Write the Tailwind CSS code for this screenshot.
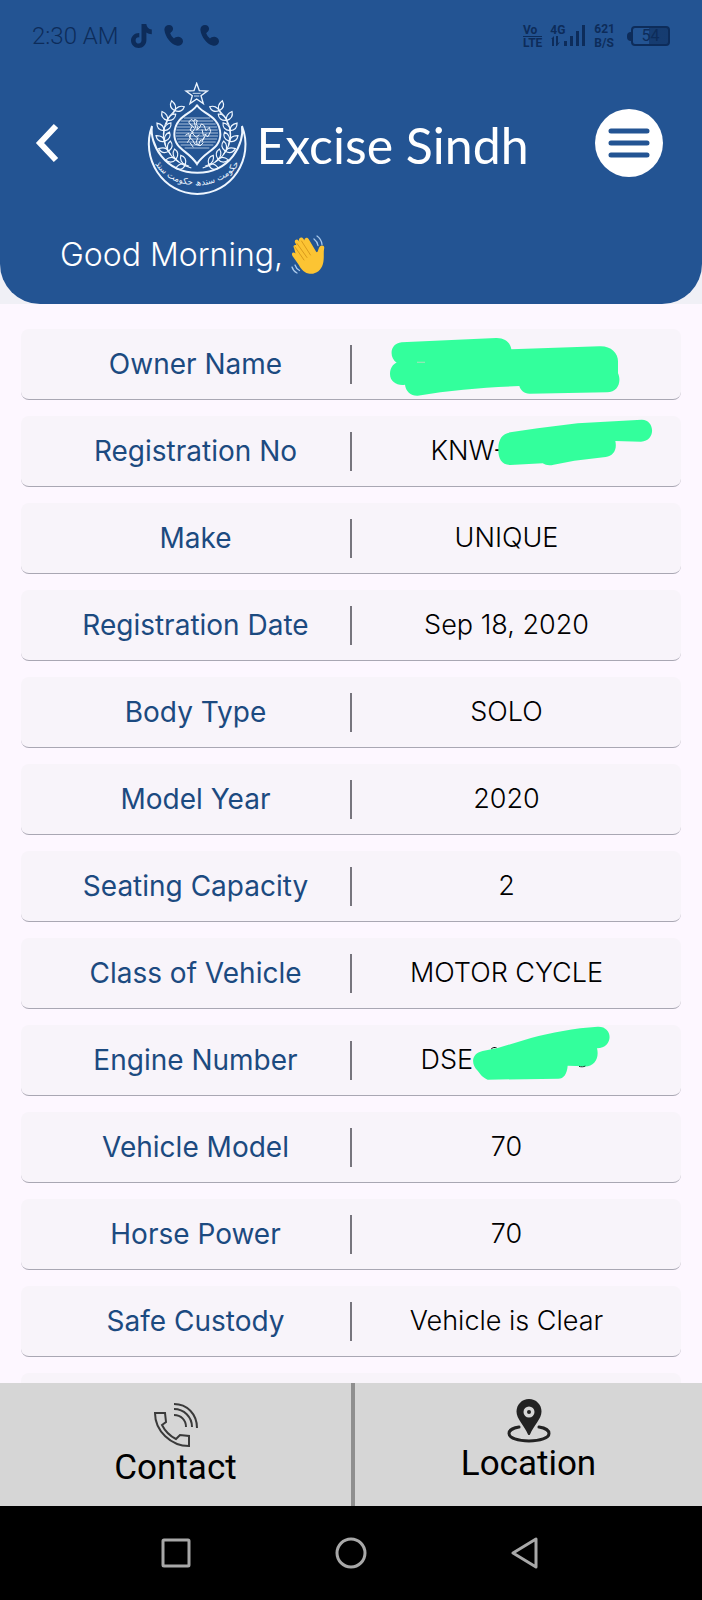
<!DOCTYPE html>
<html lang="en">
<head>
  <meta charset="UTF-8" />
  <meta name="viewport" content="width=device-width, initial-scale=1.0" />
  <title>Excise Sindh</title>
  <script src="https://cdn.jsdelivr.net/npm/@tailwindcss/browser@4"></script>
</head>
<body class="h-screen flex flex-col bg-[#fdf7ff] font-['Inter','Noto_Sans',sans-serif] text-black">

  <!-- header -->
  <div class="flex-none bg-[#f0f0f6]">
    <header class="bg-[#235493] rounded-b-[40px] pb-6">

      <!-- status bar -->
      <div class="flex items-center justify-between h-[72px] px-8 text-[#0d2c5a] font-['Roboto',sans-serif]">
        <div class="flex items-center gap-3">
          <span class="text-2xl font-light">2:30 AM</span>
          <svg class="w-[21px] h-6" viewBox="0 0 21 24" fill="currentColor">
            <path d="M10.5 0h4.800c.3 3 2.200 5.200 5.500 5.500v4.700c-2.100 0-3.900-.6-5.400-1.600v7.400c0 4.600-3.400 8-7.700 8S0 20.700 0 16.500s3.500-7.700 8.300-7.600v4.500c-2.200-.3-3.700 1.100-3.700 3s1.300 3.100 3 3.100c1.800 0 2.900-1.300 2.900-3.200z"/>
          </svg>
          <div class="flex gap-4">
            <svg class="w-5 h-[22px]" viewBox="0 0 20 22" fill="currentColor">
              <path d="M5 0c2.600 0 4.300 2 4 4.300C8.800 6 7.300 7 6.200 8.300c.9 2.200 2 3.800 3.800 5.200 1-.9 2.400-1.800 4.400-1.700 3 .2 5 2.600 4.500 5.200-.5 2.800-3.400 4.400-6.300 3.600C6.500 18.800 1.500 12 .5 5.500-.1 2.300 2 0 5 0z"/>
            </svg>
            <svg class="w-5 h-[22px]" viewBox="0 0 20 22" fill="currentColor">
              <path d="M5 0c2.600 0 4.300 2 4 4.300C8.800 6 7.300 7 6.200 8.300c.9 2.200 2 3.800 3.800 5.200 1-.9 2.400-1.800 4.400-1.700 3 .2 5 2.600 4.500 5.200-.5 2.800-3.400 4.400-6.300 3.600C6.500 18.800 1.500 12 .5 5.500-.1 2.300 2 0 5 0z"/>
            </svg>
          </div>
        </div>
        <div class="flex items-center gap-2 text-xs leading-3 font-bold">
          <div>
            <p>Vo</p>
            <p class="border-t border-[#0d2c5a]">LTE</p>
          </div>
          <div class="relative w-9 h-6">
            <p>4G</p>
            <svg class="absolute inset-0 w-9 h-6" viewBox="0 0 36 24" fill="currentColor">
              <path d="M1 15l3-3v10H2v-7zM6 12h2v7l2-1-3 4H6zM14 17h3v5h-3zM20 12h3v10h-3zM26 7h3v15h-3zM32 1h3v21h-3z"/>
            </svg>
          </div>
          <div class="leading-[14px]">
            <p>621</p>
            <p>B/S</p>
          </div>
          <div class="flex items-center pl-1">
            <span class="w-1 h-[9px] bg-[#0d2c5a] rounded-l"></span>
            <span class="flex items-center justify-center w-[39px] h-5 rounded border-2 border-[#0d2c5a] bg-linear-to-r from-transparent from-45% to-[#0d2c5a]/60 to-45% text-base font-normal">54</span>
          </div>
        </div>
      </div>

      <!-- title row -->
      <div class="flex items-center justify-between pt-[10px] pl-8 pr-[39px]">
        <button type="button" aria-label="Back" class="w-7 h-[42px] mt-2">
          <svg class="w-full h-full" viewBox="0 0 28 42" fill="none" stroke="#fff" stroke-width="6">
            <path d="M24 4L8 21l16 17"/>
          </svg>
        </button>

        <div class="flex items-center gap-2 pl-5">
          <svg class="w-[102px] h-[114px] flex-none" viewBox="48 30 306 342" fill="none" stroke="#eef6ff">
            <defs>
              <g id="pair">
                <path d="M0 0C-16 0-22-10-22-22C-10-20 0-12 0 0z"/>
                <path d="M0 0C16-2 22-12 20-24C8-22-1-12 0 0z"/>
                <path d="M0 0v12"/>
              </g>
              <g id="branch" stroke-width="3.500">
                <use href="#pair" transform="translate(134 116) rotate(28)"/>
                <use href="#pair" transform="translate(112 145) rotate(14)"/>
                <use href="#pair" transform="translate(102 176) rotate(2)"/>
                <use href="#pair" transform="translate(104 208) rotate(-12)"/>
                <use href="#pair" transform="translate(116 238) rotate(-30)"/>
                <use href="#pair" transform="translate(138 262) rotate(-48)"/>
                <use href="#pair" transform="translate(166 278) rotate(-66)"/>
                <path d="M134 116C100 150 90 190 112 234C128 262 150 278 184 288"/>
              </g>
            </defs>
            <path stroke-width="4" d="M200 34l8 22 24 1-19 14 7 24-20-14-20 14 7-24-19-14 24-1z"/>
            <path stroke-width="2.500" d="M188 64h24M192 72h16"/>
            <use href="#branch"/>
            <use href="#branch" transform="matrix(-1 0 0 1 402 0)"/>
            <path stroke-width="6" d="M201 98C196 122 133 128 133 187C133 232 176 236 201 276C226 236 271 232 271 187C271 128 206 122 201 98z"/>
            <path stroke-width="2" d="M162 138h78M152 147h98M145 156h112M141 165h120M139 174h124M138 183h126M138 192h126M141 201h120M145 210h112M152 219h98M164 228h74"/>
            <path stroke-width="3" d="M176 150l8-8 8 6 2-6 8 4-4 10 6 8-4 10 8-6 6-12 8 4 6 16 10-10 4 12-8 16-8-4-6 12-10 4-4 14-12-4-6-12-8-6 2-12 8-4-10-8 6-10zM184 158l10 12-8 12 12 14 10-8M204 196l-6 16 12 10 10-10M216 172l4 18 10-4M166 190l10-6 4 16-8 12M180 212l10 14M192 148l6 22M222 196l-6 14"/>
            <path stroke-width="6" d="M66 162C30 260 100 366 202 366C304 366 374 260 336 162C344 214 302 302 202 302C102 302 58 214 66 162z"/>
            <path id="motto" stroke="none" d="M68 262C116 366 286 366 334 262"/>
            <text fill="#eef6ff" stroke="none" font-family="'DejaVu Sans', sans-serif" font-size="26" text-anchor="middle">
              <textPath href="#motto" startOffset="50%">حکومت سندھ حکومت سنڌ</textPath>
            </text>
          </svg>
          <h1 class="mt-3 text-white text-[50px] leading-[56px] font-['Lato',sans-serif] whitespace-nowrap">Excise Sindh</h1>
        </div>

        <button type="button" aria-label="Menu" class="flex items-center justify-center w-[68px] h-[68px] mt-2 rounded-full bg-white">
          <svg class="w-[42px] h-[30px]" viewBox="0 0 42 30" stroke="#235493" stroke-width="5" stroke-linecap="round">
            <path d="M3 3h36M3 15h36M3 27h36"/>
          </svg>
        </button>
      </div>

      <!-- greeting -->
      <div class="flex items-center gap-2 pt-9 pb-[2px] pl-[60px]">
        <p class="text-white text-[32px] leading-[46px] font-light">Good Morning,</p>
        <svg class="w-9 h-10" viewBox="0 0 36 40" fill="none" stroke-linecap="round">
          <path fill="#fcc433" d="M3 13c-1.500-2 .5-4 2.500-2.700L4 7.500C3 5 6 3.500 7.500 5.500L8.500 7C6.500 3 10.500 1 12.500 4l1 1.500C13 3 16 1.500 17.600 4l7.400 12.500c.8 1.200 1.600.5 1.900-.5.800-2.500 1.200-4.800 3.700-5.500 1.600-.4 2.900.8 2.600 2.500-1 5 .3 10-1.300 16-1.900 7-8 11-14.500 9.500C12 37.300 9.500 33 7.500 29.500L1.500 21c-1.800-3 1-4.500 3-2.500z"/>
          <path stroke="#d99a1c" stroke-width="1" d="M4 12l9 13M6 8.500l10 14M10.500 6l9 14"/>
          <path stroke="#a9c8ea" stroke-width="1.300" d="M23 4c2 1.500 3.500 3.500 4 6.500M26 1c3 2 4.600 5 5 8.500M4 30c.8 2.500 2.300 4.300 4.500 5.500M1 32c.8 2.800 2.500 4.800 5 6"/>
        </svg>
      </div>
    </header>
  </div>
  <!-- end header -->

  <!-- vehicle details -->
  <main class="flex-1 min-h-0 overflow-hidden px-[21px] pt-[25px]">
    <dl class="flex flex-col gap-4 text-center text-[27px]">
      <div class="flex flex-none items-center h-[71px] px-5 bg-[#f8f4fa] rounded-lg border-b border-[#a9a7b3]">
        <dt class="flex-1 text-[28px] text-[#1c4a80]">Owner Name</dt>
        <dd class="h-[39px] border-l-2 border-[#77757d]"></dd>
        <dd class="relative flex-1 h-full">
          <svg class="absolute top-0 left-1/2 -translate-x-1/2 w-[310px] h-[71px]" viewBox="3 57 930 213" fill="#33ff9c">
            <path d="M152 97L435 84C462 83 478 98 481 118L745 109C780 107 803 130 801 158L801 190C812 214 802 247 768 247L536 251C518 250 508 240 505 228C400 232 300 240 200 257C180 258 164 244 162 224C140 228 117 216 117 192C117 174 126 162 137 158C112 140 118 100 152 97z"/>
            <path stroke="#8fe8b4" stroke-width="4" d="M198 157h24"/>
          </svg>
        </dd>
      </div>
      <div class="flex flex-none items-center h-[71px] px-5 bg-[#f8f4fa] rounded-lg border-b border-[#a9a7b3]">
        <dt class="flex-1 text-[28px] text-[#1c4a80]">Registration No</dt>
        <dd class="h-[39px] border-l-2 border-[#77757d]"></dd>
        <dd class="relative flex flex-1 h-full items-center justify-center font-light">
          <span class="w-[152px] text-left">KNW-</span>
          <svg class="absolute top-0 left-1/2 -translate-x-1/2 w-[310px] h-[71px]" viewBox="3 318 930 213" fill="#33ff9c">
            <path d="M478 367L560 355L680 340L872 329C912 328 916 394 870 395L793 393C799 420 786 438 764 441L670 452L608 464C594 468 584 465 575 460L478 465C450 464 441 444 442 416C442 388 454 370 478 367z"/>
          </svg>
        </dd>
      </div>
      <div class="flex flex-none items-center h-[71px] px-5 bg-[#f8f4fa] rounded-lg border-b border-[#a9a7b3]">
        <dt class="flex-1 text-[28px] text-[#1c4a80]">Make</dt>
        <dd class="h-[39px] border-l-2 border-[#77757d]"></dd>
        <dd class="flex-1 font-light">UNIQUE</dd>
      </div>
      <div class="flex flex-none items-center h-[71px] px-5 bg-[#f8f4fa] rounded-lg border-b border-[#a9a7b3]">
        <dt class="flex-1 text-[28px] text-[#1c4a80]">Registration Date</dt>
        <dd class="h-[39px] border-l-2 border-[#77757d]"></dd>
        <dd class="flex-1 font-light">Sep 18, 2020</dd>
      </div>
      <div class="flex flex-none items-center h-[71px] px-5 bg-[#f8f4fa] rounded-lg border-b border-[#a9a7b3]">
        <dt class="flex-1 text-[28px] text-[#1c4a80]">Body Type</dt>
        <dd class="h-[39px] border-l-2 border-[#77757d]"></dd>
        <dd class="flex-1 font-light">SOLO</dd>
      </div>
      <div class="flex flex-none items-center h-[71px] px-5 bg-[#f8f4fa] rounded-lg border-b border-[#a9a7b3]">
        <dt class="flex-1 text-[28px] text-[#1c4a80]">Model Year</dt>
        <dd class="h-[39px] border-l-2 border-[#77757d]"></dd>
        <dd class="flex-1 font-light">2020</dd>
      </div>
      <div class="flex flex-none items-center h-[71px] px-5 bg-[#f8f4fa] rounded-lg border-b border-[#a9a7b3]">
        <dt class="flex-1 text-[28px] text-[#1c4a80]">Seating Capacity</dt>
        <dd class="h-[39px] border-l-2 border-[#77757d]"></dd>
        <dd class="flex-1 font-light">2</dd>
      </div>
      <div class="flex flex-none items-center h-[71px] px-5 bg-[#f8f4fa] rounded-lg border-b border-[#a9a7b3]">
        <dt class="flex-1 text-[28px] text-[#1c4a80]">Class of Vehicle</dt>
        <dd class="h-[39px] border-l-2 border-[#77757d]"></dd>
        <dd class="flex-1 font-light">MOTOR CYCLE</dd>
      </div>
      <div class="flex flex-none items-center h-[71px] px-5 bg-[#f8f4fa] rounded-lg border-b border-[#a9a7b3]">
        <dt class="flex-1 text-[28px] text-[#1c4a80]">Engine Number</dt>
        <dd class="h-[39px] border-l-2 border-[#77757d]"></dd>
        <dd class="relative flex flex-1 h-full items-center justify-center font-light">
          <span class="w-[172px] text-left">DSE-</span>
          <svg class="absolute top-0 left-1/2 -translate-x-1/2 w-[310px] h-[71px]" viewBox="3 75 930 213" fill="#33ff9c">
            <path fill="none" stroke="#000" stroke-width="3" d="M420 148C425 142 432 141 437 144"/>
            <path d="M395 153L440 144L540 114C600 98 670 84 740 80C788 78 788 144 738 145C746 176 728 202 698 199L650 197C648 222 638 236 622 236L410 239C394 232 388 222 380 212C358 190 362 160 395 153z"/>
            <path fill="none" stroke="#0b3d26" stroke-width="3" d="M684 199C690 201 698 201 703 198"/>
          </svg>
        </dd>
      </div>
      <div class="flex flex-none items-center h-[71px] px-5 bg-[#f8f4fa] rounded-lg border-b border-[#a9a7b3]">
        <dt class="flex-1 text-[28px] text-[#1c4a80]">Vehicle Model</dt>
        <dd class="h-[39px] border-l-2 border-[#77757d]"></dd>
        <dd class="flex-1 font-light">70</dd>
      </div>
      <div class="flex flex-none items-center h-[71px] px-5 bg-[#f8f4fa] rounded-lg border-b border-[#a9a7b3]">
        <dt class="flex-1 text-[28px] text-[#1c4a80]">Horse Power</dt>
        <dd class="h-[39px] border-l-2 border-[#77757d]"></dd>
        <dd class="flex-1 font-light">70</dd>
      </div>
      <div class="flex flex-none items-center h-[71px] px-5 bg-[#f8f4fa] rounded-lg border-b border-[#a9a7b3]">
        <dt class="flex-1 text-[28px] text-[#1c4a80]">Safe Custody</dt>
        <dd class="h-[39px] border-l-2 border-[#77757d]"></dd>
        <dd class="flex-1 font-light">Vehicle is Clear</dd>
      </div>
      <div class="flex-none h-[71px] bg-[#f8f4fa] rounded-lg"></div>
    </dl>
  </main>
  <!-- end vehicle details -->

  <!-- bottom bar -->
  <footer class="flex-none">
    <div class="flex h-[123px] bg-[#d6d6d6] text-[35px] leading-[42px] font-['Roboto',sans-serif]">
      <a href="#contact" class="flex w-1/2 flex-col items-center pt-5">
        <svg class="w-11 h-11" viewBox="0 0 44 44" fill="none" stroke="#3a3a3a" stroke-width="2">
          <path d="M1 10h10l1 9-4 3c3 6 8 11 14 14l4-4 9 1v10C17 43 1 28 1 10z"/>
          <path d="M20 1c13 0 23 10 23 24M20 6c10 0 18 8 18 18M20 12c7 0 12 5 12 12"/>
        </svg>
        <span>Contact</span>
      </a>
      <a href="#location" class="flex w-1/2 flex-col items-center pt-4 border-l-4 border-[#8f8f8f]">
        <svg class="w-11 h-11" viewBox="0 0 44 44">
          <path fill="none" stroke="#222" stroke-width="3" stroke-linecap="round" d="M12 28C5 29 2 32 2 34.500C2 39 11 42 22 42s20-3 20-7.500C42 32 39 29 32 28"/>
          <path fill="#222" fill-rule="evenodd" d="M22 0c7 0 12.500 5.500 12.500 12.500C34.500 20 27 26 23 35.500c-.4.800-1.600.8-2 0C17 26 9.500 20 9.500 12.500 9.500 5.500 15 0 22 0zm0 7.500a5.500 5.500 0 100 11 5.500 5.500 0 000-11z"/>
          <circle cx="22" cy="13" r="2" fill="#222"/>
        </svg>
        <span>Location</span>
      </a>
    </div>

    <nav class="flex items-center justify-center h-[94px] bg-black">
      <div class="flex w-3/4 justify-around">
        <button type="button" aria-label="Recent apps">
          <svg class="w-8 h-8" viewBox="0 0 32 32" fill="none" stroke="#a8a8a8" stroke-width="3"><rect x="3" y="3" width="26" height="26" rx="1"/></svg>
        </button>
        <button type="button" aria-label="Home">
          <svg class="w-8 h-8" viewBox="0 0 32 32" fill="none" stroke="#a8a8a8" stroke-width="3"><circle cx="16" cy="16" r="14"/></svg>
        </button>
        <button type="button" aria-label="Back">
          <svg class="w-8 h-8" viewBox="0 0 32 32" fill="none" stroke="#a8a8a8" stroke-width="3" stroke-linejoin="round"><path d="M25 2v28L2 16z"/></svg>
        </button>
      </div>
    </nav>
  </footer>
  <!-- end bottom bar -->

</body>
</html>
